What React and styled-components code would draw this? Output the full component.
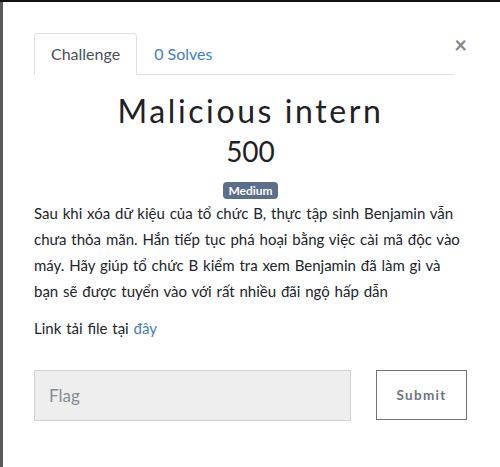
import React from "react";
import styled, { createGlobalStyle } from "styled-components";

const GlobalStyle = createGlobalStyle`
  html, body {
    margin: 0;
    padding: 0;
    background: #111;
  }
  body {
    font-family: Lato, "Noto Sans", sans-serif;
    color: #212529;
  }
`;

const Backdrop = styled.div`
  height: 467px;
  overflow: hidden;
  padding-top: 2px;
  background: #121212;
  box-sizing: border-box;
`;

const Modal = styled.div`
  margin-left: 3px;
  height: 465px;
  background: #fff;
  box-shadow: -3px 0 0 #5a5a5a;
  padding: 31px 33px 0 31px;
  box-sizing: border-box;
`;

const HeaderRow = styled.div`
  display: flex;
  align-items: flex-start;
`;

const Tabs = styled.ul`
  display: flex;
  list-style: none;
  margin: 0;
  padding: 0;
  width: 420px;
  border-bottom: 1px solid #dee2e6;
`;

const Tab = styled.li`
  margin-bottom: -1px;
  padding: 10px 16px 10px;
  font-size: 16px;
  line-height: 20px;
  color: ${(p) => (p.active ? "#495057" : "#3f7dc8")};
  background: ${(p) => (p.active ? "#fff" : "transparent")};
  border: 1px solid ${(p) => (p.active ? "#dee2e6" : "transparent")};
  border-bottom-color: ${(p) => (p.active ? "#fff" : "transparent")};
  border-radius: 4px 4px 0 0;
`;

const Close = styled.button`
  margin-left: auto;
  margin-top: 1px;
  border: 0;
  background: none;
  padding: 0;
  font-family: Lato, sans-serif;
  font-size: 22px;
  line-height: 22px;
  color: #858585;
  font-weight: 700;
`;

const Title = styled.h2`
  margin: 17px 0 0;
  text-align: center;
  font-family: Lato, sans-serif;
  font-weight: 400;
  font-size: 32px;
  line-height: 38px;
  letter-spacing: 2.6px;
  color: #1e2226;
`;

const Points = styled.h4`
  margin: 4px 0 0;
  text-align: center;
  font-weight: 400;
  font-size: 28px;
  line-height: 34px;
  color: #1e2226;
`;

const BadgeRow = styled.div`
  display: flex;
  justify-content: center;
  margin-top: 14px;
`;

const Badge = styled.span`
  background: #5b6e8c;
  color: #fff;
  font-weight: 700;
  font-size: 12px;
  line-height: 17px;
  padding: 0 5px;
  border-radius: 4px;
`;

const Description = styled.p`
  margin: 1px 0 0;
  font-size: 15px;
  line-height: 26px;
  word-spacing: 1px;
  color: #212529;
`;

const LinkLine = styled.p`
  margin: 13px 0 0;
  font-size: 15px;
  line-height: 22px;
  word-spacing: 1px;
`;

const Link = styled.a`
  color: #3f7dc8;
  text-decoration: none;
`;

const FormRow = styled.form`
  display: flex;
  gap: 25px;
  margin-top: 31px;
`;

const FlagInput = styled.input`
  width: 317px;
  height: 51px;
  box-sizing: border-box;
  background: #eee;
  border: 1px solid #d0d3d8;
  padding: 0 14px;
  font-family: Lato, sans-serif;
  font-size: 17px;
  &::placeholder {
    color: #858c96;
  }
`;

const SubmitButton = styled.button`
  width: 91px;
  height: 50px;
  box-sizing: border-box;
  background: #fff;
  border: 1px solid #6c757d;
  font-family: Lato, sans-serif;
  font-weight: 700;
  font-size: 13.5px;
  letter-spacing: 1.3px;
  color: #6c757d;
`;

export default function App() {
  return (
    <>
      <GlobalStyle />
      <Backdrop>
        <Modal>
          <HeaderRow>
            <Tabs>
              <Tab active>Challenge</Tab>
              <Tab>0 Solves</Tab>
            </Tabs>
            <Close aria-label="Close">×</Close>
          </HeaderRow>
          <Title>Malicious intern</Title>
          <Points>500</Points>
          <BadgeRow>
            <Badge>Medium</Badge>
          </BadgeRow>
          <Description>
            Sau khi xóa dữ kiệu của tổ chức B, thực tập sinh Benjamin vẫn chưa
            thỏa mãn. Hắn tiếp tục phá hoại bằng việc cài mã độc vào máy. Hãy
            giúp tổ chức B kiểm tra xem Benjamin đã làm gì và bạn sẽ được tuyển
            vào với rất nhiều đãi ngộ hấp dẫn
          </Description>
          <LinkLine>
            Link tải file tại <Link href="#">đây</Link>
          </LinkLine>
          <FormRow onSubmit={(e) => e.preventDefault()}>
            <FlagInput placeholder="Flag" />
            <SubmitButton type="submit">Submit</SubmitButton>
          </FormRow>
        </Modal>
      </Backdrop>
    </>
  );
}
